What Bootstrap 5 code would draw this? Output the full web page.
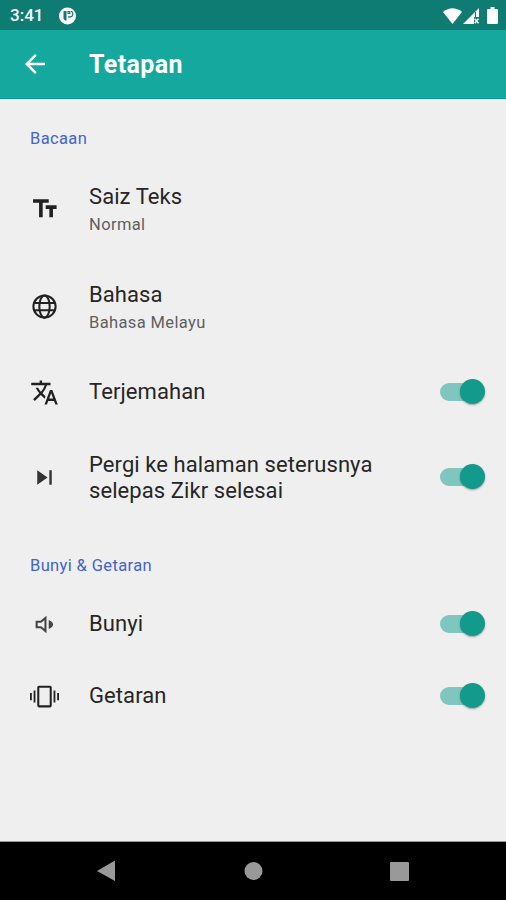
<!DOCTYPE html>
<html lang="ms">
<head>
<meta charset="utf-8">
<meta name="viewport" content="width=device-width, initial-scale=1">
<title>Tetapan</title>
<link href="https://cdn.jsdelivr.net/npm/bootstrap@5.3.0/dist/css/bootstrap.min.css" rel="stylesheet">
<style>
body{font-family:Roboto,"Liberation Sans",sans-serif;background:#efefef;color:#262626;height:900px}
svg{display:block;flex:none}
.status-bar{height:30px;background:#0f7c74;color:#fff;padding:1px 8px 0 10px;font-size:17px;font-weight:500}
.app-bar{height:69px;background:#14a89e;color:#fff;padding-left:20px;border-bottom:1px solid #0d9c92}
.app-title{font-size:25px;font-weight:700;letter-spacing:.4px;margin:0 0 0 39px;line-height:1}
.section-title{color:#4264cb;font-size:16.5px;font-weight:400;letter-spacing:.37px;line-height:20px;margin:0;padding-left:30px}
.section-first{padding-top:30px;height:61px}
.section-next{padding-top:30px;height:62px}
.pref{padding:0 21px 0 30px}
.pref-tall{height:98px}
.pref-short{height:72px}
.pref-label{font-size:22px;line-height:26px;letter-spacing:.08px;margin-left:30px;padding-top:1px}
.pref-short .pref-label{padding-top:0}
.pref-label small{display:block;font-size:16.5px;line-height:20px;letter-spacing:.38px;color:#5f5f5f;margin-top:5px}
.toggle{appearance:none;width:45px;height:26px;margin:0;position:relative;flex:none}
.toggle::before{content:"";position:absolute;left:0;top:4px;width:38px;height:18px;border-radius:9px;background:#7fc6bf}
.toggle::after{content:"";position:absolute;right:0;top:0;width:25px;height:25px;border-radius:50%;background:#129a8c;box-shadow:0 1px 2px rgba(0,0,0,.35)}
.nav-bar{height:58px;background:#000;box-shadow:0 -1px 0 #999}
</style>
<script defer src="https://cdn.jsdelivr.net/npm/bootstrap@5.3.0/dist/js/bootstrap.bundle.min.js"></script>
</head>
<body class="d-flex flex-column overflow-hidden">
<div class="status-bar d-flex align-items-center">
  <span>3:41</span>
  <svg width="18" height="18" viewBox="0 0 18 18" class="ms-3"><circle cx="8.500" cy="9" r="8.500" fill="#fff"/><path d="M4.500 4h3v9.500H6L4.500 12z" fill="#0f7c74"/><path d="M9 4.500h1.800v2H9zM12 4.300a2.900 2.900 0 0 1-.8 5.600H9" fill="none" stroke="#0f7c74" stroke-width="1.100"/></svg>
  <div class="ms-auto d-flex align-items-center">
    <svg width="19" height="16" viewBox="0 0 19 16"><path fill="#fff" d="M0 4Q9.500-3.500 19 4L9.500 16z"/></svg>
    <svg width="17" height="16" viewBox="0 0 17 16"><path fill="#fff" d="M1 16 17 0v9h-5v7z"/><path d="M13.500 4v6" stroke="#0f7c74" stroke-width="1.200"/><path d="m12.700 10.700 3.800 4.600m0-4.600-3.800 4.600" stroke="#fff" stroke-width="1.500"/></svg>
    <svg width="11" height="17" viewBox="0 0 11 17" class="ms-2"><path fill="#fff" d="M3.500 0h4v2H10q1 0 1 1v13q0 1-1 1H1q-1 0-1-1V3q0-1 1-1h2.500z"/></svg>
  </div>
</div>
<header class="app-bar d-flex align-items-center">
  <svg width="30" height="30" viewBox="0 0 24 24" fill="#fff"><path d="M20 11H7.830l5.590-5.590L12 4l-8 8 8 8 1.410-1.410L7.830 13H20z"/></svg>
  <h1 class="app-title">Tetapan</h1>
</header>
<main class="flex-grow-1">
  <h2 class="section-title section-first">Bacaan</h2>
  <div class="pref pref-tall d-flex align-items-center">
    <svg width="29" height="29" viewBox="0 0 24 24" fill="#212121"><path d="M2.500 3.500v3h5v12h3v-12h5v-3zm19.500 5h-9v3h3v7h3v-7h3z"/></svg>
    <div class="pref-label">Saiz Teks<small>Normal</small></div>
  </div>
  <div class="pref pref-tall d-flex align-items-center">
    <svg width="29" height="29" viewBox="0 0 24 24" fill="none" stroke="#212121" stroke-width="1.700"><circle cx="12" cy="11.200" r="9.200"/><ellipse cx="12" cy="11.200" rx="4.300" ry="9.200"/><path d="M3.500 8.200h17m-17 6h17"/></svg>
    <div class="pref-label">Bahasa<small>Bahasa Melayu</small></div>
  </div>
  <div class="pref pref-short d-flex align-items-center">
    <svg width="29" height="29" viewBox="0 0 24 24" fill="#212121"><path d="M12.870 15.070l-2.540-2.510.03-.03A17.520 17.520 0 0 0 14.070 6H17V4h-7V2H8v2H1v1.990h11.170C11.500 7.920 10.440 9.750 9 11.350 8.070 10.320 7.300 9.190 6.690 8h-2c.73 1.630 1.730 3.170 2.980 4.560l-5.090 5.020L4 19l5-5 3.110 3.110.76-2.040zM18.500 10h-2L12 22h2l1.120-3h4.750L21 22h2l-4.500-12zm-2.620 7l1.620-4.330L19.120 17h-3.240z"/></svg>
    <div class="pref-label">Terjemahan</div>
    <input class="toggle ms-auto" type="checkbox" role="switch" aria-label="Terjemahan" checked>
  </div>
  <div class="pref pref-tall d-flex align-items-center">
    <svg width="29" height="29" viewBox="0 0 24 24" fill="#333"><path d="M6 18l8.500-6L6 6v12zM16 6v12h2V6h-2z"/></svg>
    <div class="pref-label">Pergi ke halaman seterusnya<br>selepas Zikr selesai</div>
    <input class="toggle ms-auto" type="checkbox" role="switch" aria-label="Pergi ke halaman seterusnya" checked>
  </div>
  <h2 class="section-title section-next">Bunyi &amp; Getaran</h2>
  <div class="pref pref-short d-flex align-items-center">
    <svg width="29" height="29" viewBox="0 0 24 24"><path d="M5.500 9.800H9l3.800-3.200v10.800L9 14.200H5.500z" fill="none" stroke="#444" stroke-width="1.700"/><path d="M15.500 8.300v7.400q3.600-1.400 3.600-3.700t-3.600-3.700z" fill="#444"/></svg>
    <div class="pref-label">Bunyi</div>
    <input class="toggle ms-auto" type="checkbox" role="switch" aria-label="Bunyi" checked>
  </div>
  <div class="pref pref-short d-flex align-items-center">
    <svg width="29" height="29" viewBox="0 0 24 24" fill="#212121"><path d="M0 15h1.500V9H0v6zm3 2h1.500V7H3v10zm19.500-8v6H24V9h-1.500zm-3 8H21V7h-1.500v10zM16.500 3h-9C6.670 3 6 3.670 6 4.500v15c0 .83.67 1.500 1.500 1.500h9c.83 0 1.500-.67 1.500-1.500v-15c0-.83-.67-1.500-1.500-1.500zM16.300 19.300H7.700V4.700h8.600v14.600z"/></svg>
    <div class="pref-label">Getaran</div>
    <input class="toggle ms-auto" type="checkbox" role="switch" aria-label="Getaran" checked>
  </div>
</main>
<nav class="nav-bar">
  <svg class="w-100" height="58" viewBox="0 0 506 58" fill="#999"><path d="M97 29 115 18.500v20.500z"/><circle cx="253.500" cy="29" r="9"/><rect x="390" y="20" width="19" height="19" rx="1"/></svg>
</nav>
</body>
</html>
